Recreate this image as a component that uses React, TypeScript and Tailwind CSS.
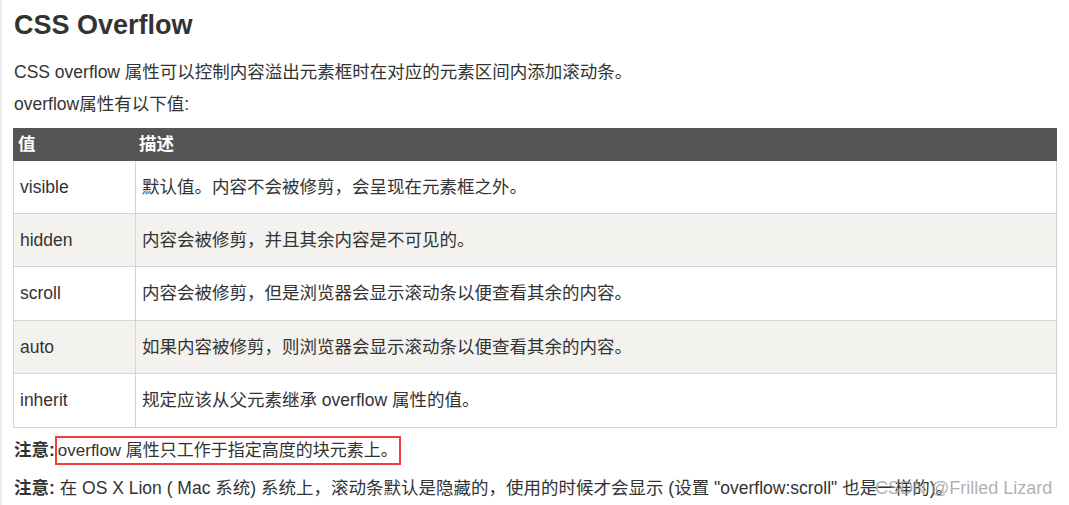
const rows = [
    { value: 'visible', desc: '默认值。内容不会被修剪，会呈现在元素框之外。', h: 'h-[53px]', bg: 'bg-white' },
    { value: 'hidden', desc: '内容会被修剪，并且其余内容是不可见的。', h: 'h-[53px]', bg: 'bg-[#f3f2ee]' },
    { value: 'scroll', desc: '内容会被修剪，但是浏览器会显示滚动条以便查看其余的内容。', h: 'h-[54px]', bg: 'bg-white' },
    { value: 'auto', desc: '如果内容被修剪，则浏览器会显示滚动条以便查看其余的内容。', h: 'h-[53px]', bg: 'bg-[#f3f2ee]' },
    { value: 'inherit', desc: '规定应该从父元素继承 overflow 属性的值。', h: 'h-[54px]', bg: 'bg-white' },
];

export default function App() {
    return (
        <div
            className="relative w-[1069px] h-[505px] overflow-hidden bg-white border-l-2 border-[#ececec] pl-[11px] text-[#333] text-[17.5px]"
            style={{ fontFamily: '"Liberation Sans", Arial, "Noto Sans CJK SC", sans-serif' }}
        >
            <h2 className="ml-[1px] pt-[9px] text-[27px] leading-[32px] font-bold">CSS Overflow</h2>

            <p className="ml-[1px] mt-[15px] leading-[32px]">
                CSS overflow 属性可以控制内容溢出元素框时在对应的元素区间内添加滚动条。
            </p>
            <p className="ml-[1px] leading-[32px]">overflow属性有以下值:</p>

            {/* table */}
            <div className="mt-[8px] w-[1044px]">
                <div className="grid grid-cols-[121px_1fr] h-[33px] items-center bg-[#555] text-white font-bold">
                    <div className="pl-[5px]">值</div>
                    <div className="pl-[5px]">描述</div>
                </div>
                {rows.map((row) => (
                    <div
                        key={row.value}
                        className={`grid grid-cols-[121px_1fr] ${row.h} ${row.bg} border-x border-b border-[#d4d4d4]`}
                    >
                        <div className="flex items-center pl-[6px]">{row.value}</div>
                        <div className="flex items-center pl-[6px] border-l border-[#d4d4d4]">{row.desc}</div>
                    </div>
                ))}
            </div>

            <p className="ml-[1px] mt-[8px] h-[29px] flex items-center">
                <b>注意:</b>
                <span className="inline-block border-2 border-[#f23c3c] pl-[1px] pr-[1px] text-[17px] leading-[25px]">
                    overflow 属性只工作于指定高度的块元素上。
                </span>
            </p>
            <p className="ml-[1px] mt-[8px] leading-[30px] whitespace-nowrap">
                <b>注意:</b> 在 OS X Lion ( Mac 系统) 系统上，滚动条默认是隐藏的，使用的时候才会显示 (设置 "overflow:scroll" 也是一样的)。
            </p>

            <div className="absolute left-[873px] top-[476px] text-[18px] leading-[24px] text-[#9c9c9c]/80 whitespace-nowrap">
                CSDN @Frilled Lizard
            </div>
        </div>
    );
}
